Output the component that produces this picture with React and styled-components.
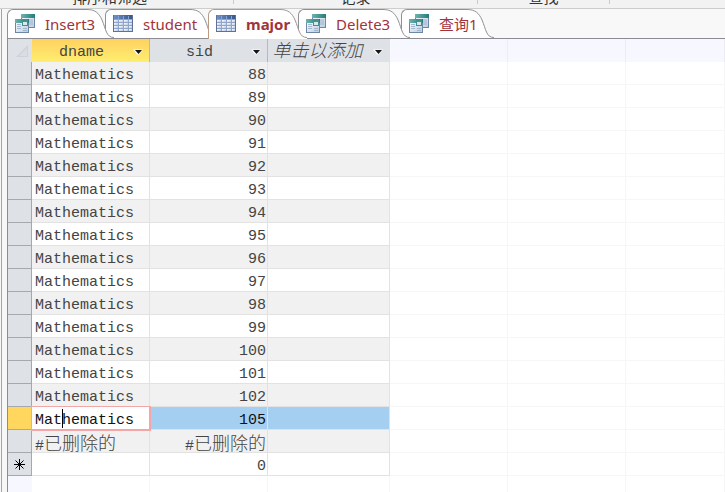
import React from 'react';
import styled, { createGlobalStyle, css } from 'styled-components';

const Global = createGlobalStyle`
  * { box-sizing: border-box; }
  body { margin: 0; overflow: hidden; background: #fff; }
  button, input { font: inherit; color: inherit; border: 0; padding: 0; margin: 0; background: none; }
`;

const Page = styled.div`
  display: flex;
  flex-direction: column;
  height: 100vh;
  overflow: hidden;
  font-family: "Noto Sans", "Noto Sans CJK SC", sans-serif;
`;

const Ribbon = styled.header`
  flex: none;
  display: grid;
  grid-template-columns: 234px 244px 132px 1fr;
  height: 9px;
  background: #f2f2f2;
  border-bottom: 1px solid #cdcdcd;
  overflow: hidden;
`;

const RibbonGroup = styled.div`
  display: flex;
  align-items: flex-end;
  justify-content: ${(p) => p.$align || 'center'};
  height: 4px;
  padding-left: ${(p) => p.$indent || 0}px;
  border-right: 1px solid ${(p) => (p.$last ? 'transparent' : '#c9c9c9')};
  font-size: 15px;
  line-height: 14px;
  color: #333;
  white-space: nowrap;
`;

const Workspace = styled.div`
  flex: 1;
  display: flex;
  min-height: 0;
`;

const Rail = styled.div`
  flex: none;
  width: 7px;
  background: #f7f7f7;
  padding-left: 1px;

  &::before {
    content: '';
    display: block;
    width: 1px;
    height: 100%;
    background: #a3a5a8;
  }
`;

const Document = styled.main`
  flex: 1;
  min-width: 0;
  display: flex;
  flex-direction: column;
`;

const TabBar = styled.nav`
  flex: none;
  display: flex;
  height: 30px;
  background: #f8f8f8;
  border-bottom: 1px solid #8b8c92;
`;

const Tab = styled.button`
  position: relative;
  z-index: ${(p) => p.$order};
  flex: 0 0 ${(p) => p.$width}px;
  display: flex;
  align-items: center;
  gap: 10px;
  height: ${(p) => (p.$active ? 30 : 29)}px;
  padding-left: 8px;
  font-size: 15px;
  line-height: 24px;
  font-weight: ${(p) => (p.$active ? 700 : 400)};
  color: #a2333b;
  white-space: nowrap;
`;

const TabShape = styled.span`
  position: absolute;
  z-index: -1;
  inset: 0 -11px 0 0;
  display: flex;
`;

const TabFace = styled.span`
  flex: 1;
  background: #fff;
  border: solid ${(p) => (p.$active ? '#b99c86' : '#8d9296')};
  border-width: 1px 0 0 1px;
  border-top-left-radius: 6px;
`;

const TabLabel = styled.span`
  height: 24px;
`;

const TabEdge = styled.svg`
  flex: none;
  display: block;
`;

const Sheet = styled.div`
  flex: 1;
  min-height: 0;
  overflow: hidden;
  border-left: 1px solid #8b8c92;
  background: #fff;
`;

const Table = styled.table`
  width: 100%;
  table-layout: fixed;
  border-collapse: separate;
  border-spacing: 0;
  font-family: "Liberation Mono", "Noto Sans CJK SC", monospace;
  font-size: 15px;
  line-height: 18px;
  color: #444;
`;

const Col = styled.col`
  width: ${(p) => (p.$w ? `${p.$w}px` : 'auto')};
`;

const HeadCell = styled.th`
  height: 23px;
  padding: 0;
  font-weight: 400;
  background: ${(p) => (p.$active ? 'linear-gradient(#ffd15f, #ffee70)' : '#dee1e6')};
  border-right: 1px solid ${(p) => (p.$soft ? '#dee1e6' : '#b5b8be')};
`;

const HeadContent = styled.div`
  display: flex;
  align-items: center;
  height: 23px;
`;

const HeadLabel = styled.span`
  flex: 1;
  padding: ${(p) => (p.$soft ? '4px 0 0' : '5px 0 0 4px')};
  text-align: center;
  white-space: nowrap;
  line-height: 20px;
`;

const MenuButton = styled.button`
  flex: none;
  display: flex;
  justify-content: center;
  align-items: center;
  width: 22px;
  height: 23px;
  padding-top: 2px;
`;

const Corner = styled.th`
  height: 23px;
  padding: 0;
  background: #dee1e6;

  svg { display: block; margin-left: 8px; }
`;

const BlankHead = styled.td`
  padding: 0;
  background: #f6f7ff;
  border-right: 1px solid #ececf2;
`;

const Selector = styled.th`
  height: 23px;
  padding: 0;
  background: ${(p) => (p.$active ? '#ffd75f' : '#dee1e6')};
  border-right: 1px solid #a5a8ae;
  border-bottom: 1px solid #a5a8ae;

  svg { display: block; margin: 0 auto; }
`;

const Cell = styled.td`
  position: relative;
  height: 23px;
  padding: 6px 1px 0 3px;
  text-align: ${(p) => (p.$right ? 'right' : 'left')};
  vertical-align: top;
  line-height: 16px;
  white-space: nowrap;
  background: ${(p) => (p.$active ? '#a5cff1' : p.$alt ? '#f1f1f1' : '#fff')};
  border-right: 1px solid #e2e2e2;
  border-bottom: 1px solid #e2e2e2;
  ${(p) => p.$active && css`color: #111;`}
  ${(p) => p.$editing && css`
    background: #fff;
    border-color: #f2a6a8;
    outline: 1px solid #f2a6a8;
    z-index: 1;
  `}
`;

const CellInput = styled.input`
  display: block;
  width: 100%;
  height: 16px;
  line-height: 16px;
  outline: 0;
`;

const Caret = styled.span`
  position: absolute;
  left: 30px;
  top: 2px;
  width: 1px;
  height: 19px;
  background: #000;
`;

const Faint = styled.td`
  height: 23px;
  padding: 0;
  border-right: 1px solid #f6f6f6;
  border-bottom: 1px solid #f6f6f6;
`;

const FaintSelector = styled.td`
  height: 23px;
  padding: 0;
  background: #f6f7ff;
`;

const Han = styled.span`
  font-family: "Noto Sans CJK SC", sans-serif;
  font-size: 18px;
  line-height: 14px;
  font-weight: 300;
  font-style: ${(p) => (p.$italic ? 'italic' : 'normal')};
`;

const DeletedMark = styled.div`
  height: 16px;
  margin-top: -1px;
`;

function TableIcon() {
  return (
    <svg width="20" height="18" viewBox="0 0 20 18" aria-hidden="true">
      <defs>
        <linearGradient id="tblHead" x1="0" y1="0" x2="1" y2="0">
          <stop offset="0" stopColor="#6f8fc4" />
          <stop offset="1" stopColor="#36588f" />
        </linearGradient>
        <linearGradient id="tblBody" x1="0" y1="0" x2="1" y2="1">
          <stop offset="0" stopColor="#ffffff" />
          <stop offset="1" stopColor="#b4c5e2" />
        </linearGradient>
      </defs>
      <rect x="0" y="0" width="20" height="17" fill="#5f7197" />
      <rect x="1" y="0" width="18" height="4" fill="url(#tblHead)" />
      <rect x="1" y="4" width="18" height="12" fill="#8fa5cb" />
      {[4, 7, 10, 13].map((y) =>
        [1, 6, 11, 16].map((x) => (
          <rect key={`${x}-${y}`} x={x} y={y + 1} width={x === 16 ? 3 : 4} height="2" fill="url(#tblBody)" />
        ))
      )}
      <path d="M5.5 1v3M10.5 1v3M15.5 1v3" stroke="#8aa4d2" />
    </svg>
  );
}

function QueryIcon() {
  return (
    <svg width="20" height="20" viewBox="0 0 20 20" aria-hidden="true">
      <defs>
        <linearGradient id="qHead" x1="0" y1="0" x2="1" y2="0">
          <stop offset="0" stopColor="#6eb3af" />
          <stop offset="1" stopColor="#247c7c" />
        </linearGradient>
        <linearGradient id="qBody" x1="0" y1="0" x2="1" y2="1">
          <stop offset="0" stopColor="#ffffff" />
          <stop offset="1" stopColor="#b9cce0" />
        </linearGradient>
      </defs>
      <rect x="6.5" y="0.5" width="13" height="13" fill="url(#qBody)" stroke="#6d88a5" />
      <rect x="6" y="0" width="14" height="4" fill="url(#qHead)" />
      <path d="M14 6h4M14 8h4M14 10h4" stroke="#9bb2cc" />
      <rect x="0.5" y="5.5" width="13" height="13" fill="url(#qBody)" stroke="#6d88a5" />
      <rect x="0" y="5" width="14" height="4" fill="url(#qHead)" />
      <rect x="7" y="5" width="6" height="7" fill="#438f91" />
      <path d="M8 8h4v3H8z" fill="#d5ebe9" />
      <path d="M2 10.5h4M2 12.5h4M2 14.5h4M8 14.5h4M8 16.5h4" stroke="#a2b8d0" />
    </svg>
  );
}

function DropArrow() {
  return (
    <svg width="10" height="6" viewBox="0 0 10 6" aria-hidden="true">
      <path d="M0 0.5h10L6 5.5H4z" fill="#fff" />
      <path d="M2 1h7L5.5 5z" fill="#151515" />
    </svg>
  );
}

const tabs = [
  { name: 'Insert3', Icon: QueryIcon, width: 98 },
  { name: 'student', Icon: TableIcon, width: 103 },
  { name: 'major', Icon: TableIcon, width: 90, active: true },
  { name: 'Delete3', Icon: QueryIcon, width: 103 },
  { name: '查询1', Icon: QueryIcon, width: 84 },
];

const sids = [88, 89, 90, 91, 92, 93, 94, 95, 96, 97, 98, 99, 100, 101, 102, 105];

function DocumentTab({ tab, index }) {
  const { name, Icon, active, width } = tab;
  const h = active ? 30 : 29;
  return (
    <Tab type="button" $width={width} $active={active} $order={active ? 20 : 10 - index}>
      <TabShape>
        <TabFace $active={active} />
        <TabEdge width="29" height={h} viewBox={`0 0 29 ${h}`} aria-hidden="true">
          <path d={`M0 0.5C8 0.5 12 4 15 11C19 20 19 28.5 27 28.5L27 ${h}H0Z`} fill="#fff" />
          <path
            d="M0 0.5C8 0.5 12 4 15 11C19 20 19 28.5 27 28.5"
            fill="none"
            stroke={active ? '#a1958c' : '#8d9296'}
          />
        </TabEdge>
      </TabShape>
      <Icon />
      <TabLabel>{name}</TabLabel>
    </Tab>
  );
}

function Header({ label, active, soft }) {
  return (
    <HeadCell scope="col" $active={active} $soft={soft}>
      <HeadContent>
        <HeadLabel $soft={soft}>{label}</HeadLabel>
        <MenuButton type="button" aria-label="Column menu"><DropArrow /></MenuButton>
      </HeadContent>
    </HeadCell>
  );
}

function FaintCells() {
  return <><Faint /><Faint /><Faint /></>;
}

function Deleted() {
  return <DeletedMark>#<Han>已删除的</Han></DeletedMark>;
}

export default function App() {
  return (
    <Page>
      <Global />
      <Ribbon>
        <RibbonGroup $align="flex-start" $indent={72}>排序和筛选</RibbonGroup>
        <RibbonGroup>记录</RibbonGroup>
        <RibbonGroup>查找</RibbonGroup>
        <RibbonGroup $last />
      </Ribbon>
      <Workspace>
        <Rail />
        <Document>
          <TabBar>
            {tabs.map((tab, i) => <DocumentTab key={tab.name} tab={tab} index={i} />)}
          </TabBar>
          <Sheet>
            <Table>
              <colgroup>
                <Col $w={24} /><Col $w={118} /><Col $w={118} /><Col $w={122} />
                <Col $w={118} /><Col $w={118} /><Col />
              </colgroup>
              <thead>
                <tr>
                  <Corner>
                    <svg width="12" height="12" viewBox="0 0 12 12" aria-hidden="true">
                      <path d="M12 0V12H0Z" fill="#cdd2db" />
                      <path d="M11 3V11H3Z" fill="#d9dde4" />
                    </svg>
                  </Corner>
                  <Header label="dname" active />
                  <Header label="sid" />
                  <Header label={<Han $italic>单击以添加</Han>} soft />
                  <BlankHead /><BlankHead /><BlankHead />
                </tr>
              </thead>
              <tbody>
                {sids.map((sid, i) => {
                  const current = sid === 105;
                  return (
                    <tr key={sid}>
                      <Selector scope="row" $active={current} />
                      <Cell $alt={i % 2 === 0} $active={current} $editing={current}>
                        {current ? (
                          <>
                            <CellInput aria-label="dname" defaultValue="Mathematics" />
                            <Caret />
                          </>
                        ) : 'Mathematics'}
                      </Cell>
                      <Cell $right $alt={i % 2 === 0} $active={current}>{sid}</Cell>
                      <Cell $alt={i % 2 === 0} $active={current} />
                      <FaintCells />
                    </tr>
                  );
                })}
                <tr>
                  <Selector scope="row" />
                  <Cell $alt><Deleted /></Cell>
                  <Cell $alt $right><Deleted /></Cell>
                  <Cell $alt />
                  <FaintCells />
                </tr>
                <tr>
                  <Selector scope="row">
                    <svg width="11" height="11" viewBox="0 0 11 11" aria-hidden="true">
                      <path d="M5.5 0V11M0 5.5H11M1.5 1.5L9.5 9.5M9.5 1.5L1.5 9.5" stroke="#000" fill="none" />
                    </svg>
                  </Selector>
                  <Cell />
                  <Cell $right>0</Cell>
                  <Cell />
                  <FaintCells />
                </tr>
                <tr>
                  <FaintSelector />
                  <Faint /><Faint /><Faint />
                  <FaintCells />
                </tr>
              </tbody>
            </Table>
          </Sheet>
        </Document>
      </Workspace>
    </Page>
  );
}
